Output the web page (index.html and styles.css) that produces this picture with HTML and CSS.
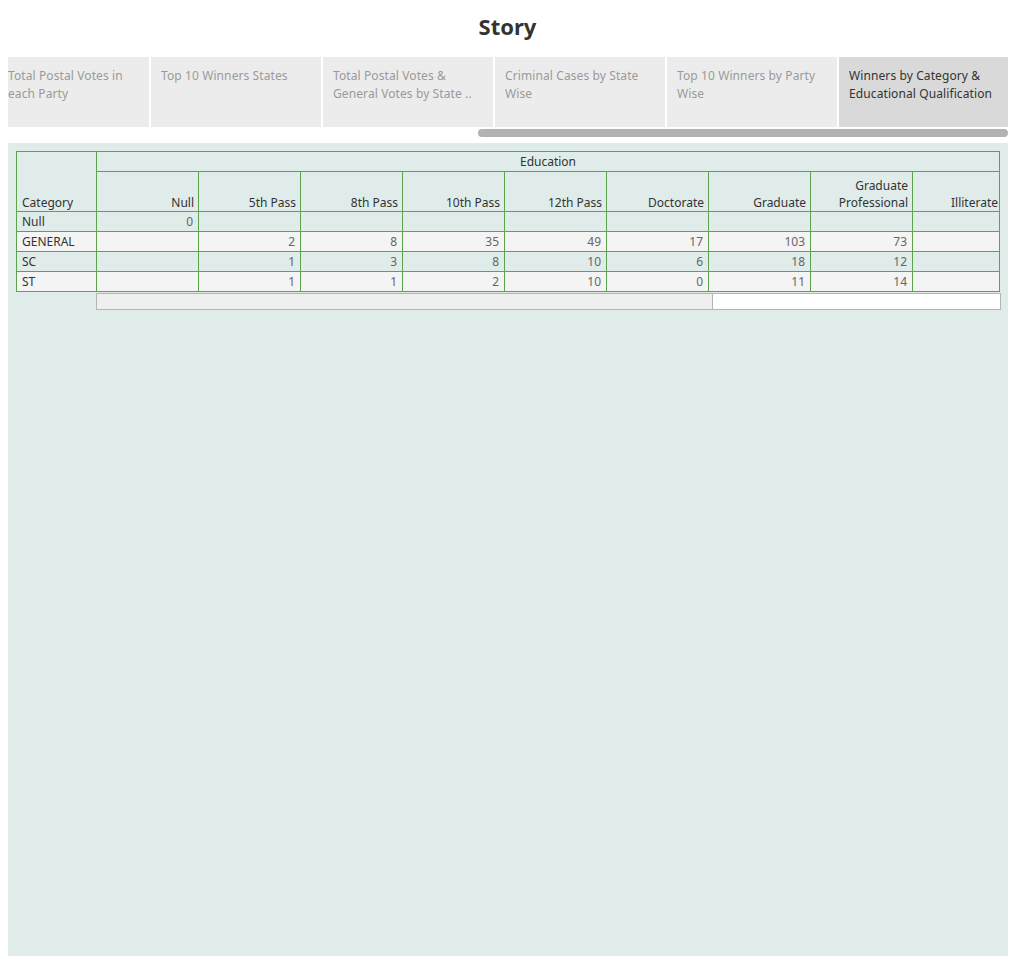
FILE: index.html
```html
<!DOCTYPE html>
<html>
<head>
<meta charset="utf-8">
<link rel="stylesheet" href="styles.css">
</head>
<body>
<header class="title-bar"><h1 class="title">Story</h1></header>
<nav class="tabs">
  <div class="tab tab-first">Total Postal Votes in each Party</div>
  <div class="tab">Top 10 Winners States</div>
  <div class="tab">Total Postal Votes &amp; General Votes by State ..</div>
  <div class="tab">Criminal Cases by State Wise</div>
  <div class="tab">Top 10 Winners by Party Wise</div>
  <div class="tab tab-active">Winners by Category &amp; Educational Qualification</div>
</nav>
<div class="tab-scroll"><div class="tab-thumb"></div></div>
<main class="dashboard">
  <div class="crosstab">
    <div class="cell cat-head">Category</div>
    <div class="cell edu-head">Education</div>
    <div class="cell col-head">Null</div>
    <div class="cell col-head">5th Pass</div>
    <div class="cell col-head">8th Pass</div>
    <div class="cell col-head">10th Pass</div>
    <div class="cell col-head">12th Pass</div>
    <div class="cell col-head">Doctorate</div>
    <div class="cell col-head">Graduate</div>
    <div class="cell col-head">Graduate Professional</div>
    <div class="cell col-head last">Illiterate</div>

    <div class="cell row-label">Null</div>
    <div class="cell num">0</div><div class="cell num"></div><div class="cell num"></div><div class="cell num"></div><div class="cell num"></div><div class="cell num"></div><div class="cell num"></div><div class="cell num"></div><div class="cell num"></div>

    <div class="cell row-label alt">GENERAL</div>
    <div class="cell num alt"></div><div class="cell num alt">2</div><div class="cell num alt">8</div><div class="cell num alt">35</div><div class="cell num alt">49</div><div class="cell num alt">17</div><div class="cell num alt">103</div><div class="cell num alt">73</div><div class="cell num alt"></div>

    <div class="cell row-label">SC</div>
    <div class="cell num"></div><div class="cell num">1</div><div class="cell num">3</div><div class="cell num">8</div><div class="cell num">10</div><div class="cell num">6</div><div class="cell num">18</div><div class="cell num">12</div><div class="cell num"></div>

    <div class="cell row-label alt">ST</div>
    <div class="cell num alt"></div><div class="cell num alt">1</div><div class="cell num alt">1</div><div class="cell num alt">2</div><div class="cell num alt">10</div><div class="cell num alt">0</div><div class="cell num alt">11</div><div class="cell num alt">14</div><div class="cell num alt"></div>
  </div>
  <div class="hscroll"><div class="hthumb"></div></div>
</main>
</body>
</html>
```

FILE: styles.css
```css
* { box-sizing: border-box; }
html, body { margin: 0; padding: 0; background: #fff; }
body { font-family: "Noto Sans", "Open Sans", sans-serif; color: #333; width: 1015px; }

.title-bar { height: 57px; display: flex; align-items: center; justify-content: center; }
.title { margin: 0; font-size: 22px; font-weight: 700; color: #333; line-height: 1; padding-bottom: 6px; }

.tabs { display: flex; gap: 2px; margin: 0 7px 0 8px; height: 70px; overflow: hidden; }
.tab { flex: 0 0 170px; height: 70px; background: #ececec; color: #9a9a9a; font-size: 12px; line-height: 18px; padding: 10px 12px 0 10px; letter-spacing: 0.1px; }
.tab-first { flex-basis: 141px; padding-left: 0; }
.tab-active { background: #d9d9d9; color: #333; }

.tab-scroll { height: 16px; padding: 2px 7px 0 478px; }
.tab-thumb { height: 8px; background: #b2b2b2; border-radius: 4px; }

.dashboard { margin: 0 7px 0 8px; height: 813px; background: #dfece9; padding: 8px 0 0 8px; }

.crosstab {
  display: grid;
  width: 984px;
  grid-template-columns: 80px repeat(8, 102px) 87px;
  grid-template-rows: 20px 40px repeat(4, 20px);
  border-top: 1px solid #5da34e;
  border-left: 1px solid #5da34e;
  font-size: 12px;
}
.cell { border-right: 1px solid #5da34e; border-bottom: 1px solid #5da34e; white-space: nowrap; overflow: hidden; }
.cat-head { grid-row: 1 / span 2; grid-column: 1; display: flex; align-items: flex-end; padding: 0 0 0 5px; line-height: 17px; }
.edu-head { grid-row: 1; grid-column: 2 / span 9; text-align: center; line-height: 19px; }
.col-head { display: flex; align-items: flex-end; justify-content: flex-end; text-align: right; white-space: normal; padding: 0 4px 0 4px; line-height: 17px; }
.col-head.last { padding-right: 1px; }
.row-label { padding-left: 5px; line-height: 20px; color: #333; }
.num { text-align: right; padding-right: 5px; line-height: 20px; color: #666; }
.alt { background: #f4f4f4; }

.hscroll { margin: 1px 0 0 80px; width: 905px; height: 17px; border: 1px solid #b4b4b4; background: #fff; display: flex; }
.hthumb { width: 616px; height: 100%; background: #efefef; border-right: 1px solid #b4b4b4; }
```
